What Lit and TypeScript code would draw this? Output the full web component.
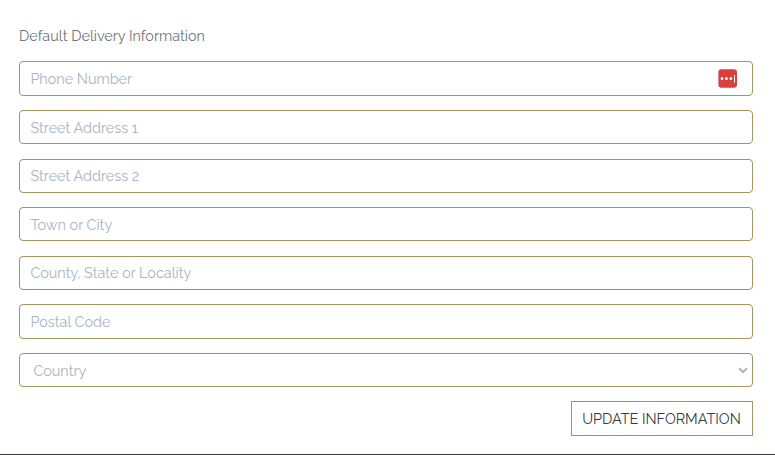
import { LitElement, html, css, svg } from "lit";
import { customElement } from "lit/decorators.js";

interface Field {
  name: string;
  label: string;
}

const FIELDS: Field[] = [
  { name: "phone", label: "Phone Number" },
  { name: "street1", label: "Street Address 1" },
  { name: "street2", label: "Street Address 2" },
  { name: "town", label: "Town or City" },
  { name: "county", label: "County, State or Locality" },
  { name: "postcode", label: "Postal Code" },
];

@customElement("app-root")
export class AppRoot extends LitElement {
  static styles = css`
    :host {
      display: block;
      box-sizing: border-box;
      height: 455px;
      padding: 26px 22px 0 19px;
      overflow: hidden;
      background: #fff;
      border-bottom: 1px solid #343a40;
      font-family: Raleway, Lato, "Open Sans", sans-serif;
      font-size: 14.4px;
    }
    * {
      box-sizing: border-box;
    }
    .title {
      margin: 0 0 15.4px;
      height: 20px;
      font-size: 14.4px;
      line-height: 20px;
      font-weight: 400;
      color: #6c757d;
    }
    .form {
      display: flex;
      flex-direction: column;
      gap: 14.3px;
    }
    .field {
      display: flex;
      align-items: center;
      height: 34.3px;
      border: 1px solid #a99160;
      border-radius: 4px;
      background: #fff;
      padding: 0 15px 0 10.4px;
    }
    .input {
      flex: 1;
      min-width: 0;
      height: 30px;
      padding: 0;
      border: 0;
      outline: 0;
      background: none;
      font: inherit;
      color: #495057;
    }
    .input::placeholder {
      color: #a8b5c0;
      opacity: 1;
    }
    .select {
      padding: 0 4px 0 13.4px;
      justify-content: space-between;
      color: #a8b5c0;
    }
    .icon {
      display: block;
      flex: none;
    }
    .button {
      align-self: flex-end;
      width: 182px;
      height: 35px;
      margin-top: -0.4px;
      padding: 0 1px 0 0;
      border: 1px solid #a99160;
      border-radius: 0;
      background: #fff;
      color: #343a40;
      font: inherit;
      white-space: nowrap;
    }
  `;

  private managerIcon() {
    return html`<svg class="icon" width="19" height="19" viewBox="0 0 19 19">
      ${svg`<rect x="0.4" y="0.3" width="18.6" height="18.4" rx="3" fill="#d9403d"/>
      <circle cx="4" cy="9.7" r="1.4" fill="#fff"/>
      <circle cx="8.4" cy="9.7" r="1.4" fill="#fff"/>
      <circle cx="12.9" cy="9.7" r="1.4" fill="#fff"/>
      <rect x="16" y="6" width="1" height="7.5" fill="#fff"/>`}
    </svg>`;
  }

  render() {
    return html`
      <h2 class="title">Default Delivery Information</h2>
      <form class="form">
        ${FIELDS.map(
          (f) => html`<label class="field">
            <input class="input" name=${f.name} placeholder=${f.label} />
            ${f.name === "phone" ? this.managerIcon() : null}
          </label>`
        )}
        <div class="field select" role="combobox" tabindex="0">
          <span>Country</span>
          <svg class="icon" width="10" height="7" viewBox="0 0 10 7">
            <path d="M1 1.2 L5 5 L9 1.2" fill="none" stroke="#aab7c4" stroke-width="2.2" />
          </svg>
        </div>
        <button class="button" type="button">UPDATE INFORMATION</button>
      </form>
    `;
  }
}
